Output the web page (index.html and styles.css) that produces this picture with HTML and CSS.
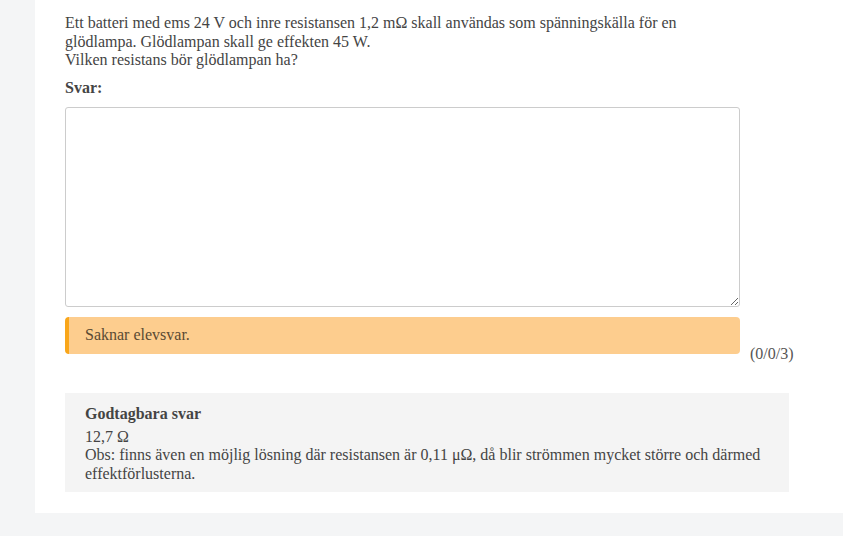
FILE: index.html
```html
<!DOCTYPE html>
<html lang="sv">
<head>
<meta charset="utf-8">
<link rel="stylesheet" href="styles.css">
</head>
<body>
<div class="panel">
  <div class="question">
    <p class="q-text">Ett batteri med ems 24 V och inre resistansen 1,2 mΩ skall användas som spänningskälla för en glödlampa. Glödlampan skall ge effekten 45 W.<br>Vilken resistans bör glödlampan ha?</p>
    <div class="label">Svar:</div>
    <div class="answer-row">
      <div class="answer-col">
        <textarea class="answer"></textarea>
        <div class="alert">Saknar elevsvar.</div>
      </div>
      <div class="score">(0/0/3)</div>
    </div>
  </div>
  <div class="accepted">
    <div class="acc-title">Godtagbara svar</div>
    <div class="acc-body">12,7 Ω<br>Obs: finns även en möjlig lösning där resistansen är 0,11 μΩ, då blir strömmen mycket större och därmed effektförlusterna.</div>
  </div>
</div>
</body>
</html>
```
FILE: styles.css
```css
html, body {
  margin: 0;
  padding: 0;
  background: #f4f5f6;
}
body {
  font-family: "Liberation Serif", "Times New Roman", serif;
  font-size: 16px;
  line-height: 18.5px;
  color: #444;
}
.panel {
  margin-left: 35px;
  background: #fff;
  padding: 14px 0 21px 30px;
}
.q-text {
  margin: 0;
  width: 660px;
}
.label {
  font-weight: bold;
  margin-top: 9px;
}
.answer-row {
  display: flex;
  align-items: flex-end;
  margin-top: 10px;
}
.answer-col {
  width: 675px;
  display: flex;
  flex-direction: column;
}
.answer {
  display: block;
  box-sizing: border-box;
  width: 675px;
  height: 200px;
  border: 1px solid #ccc;
  border-radius: 3px;
  margin: 0;
  resize: vertical;
}
.alert {
  margin-top: 10px;
  box-sizing: border-box;
  height: 37px;
  background: #fdcd8e;
  border-left: 4px solid #f9a61a;
  border-radius: 4px;
  padding: 9px 16px;
  color: #5a4a33;
}
.score {
  margin-left: 10px;
  margin-bottom: -9px;
  color: #555;
}
.accepted {
  margin-top: 39px;
  width: 724px;
  box-sizing: border-box;
  background: #f4f4f4;
  padding: 12px 20px 9px;
}
.acc-title {
  font-weight: bold;
  margin-bottom: 4px;
}
```
